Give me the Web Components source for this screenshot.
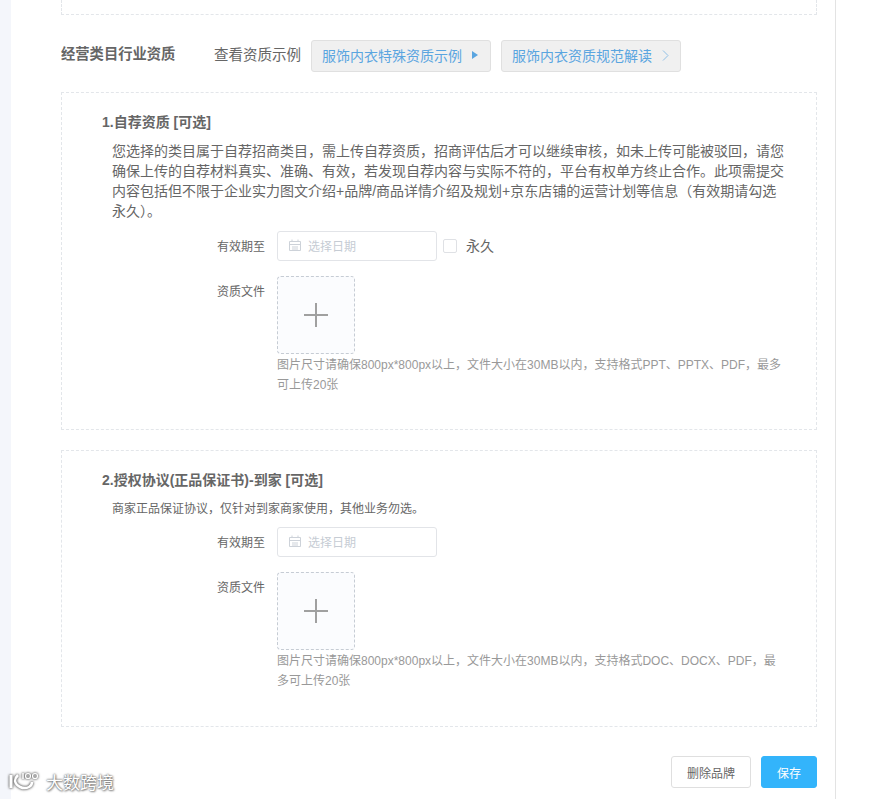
<!DOCTYPE html>
<html lang="zh">
<head>
<meta charset="utf-8">
<title>经营类目行业资质</title>
<style>
  html, body { margin: 0; padding: 0; background: #fff; }
  body { font-family: "Liberation Sans", "Noto Sans CJK SC", sans-serif; color: #666; }
</style>
</head>
<body>
<qual-page>
  <qual-header></qual-header>

  <qual-card heading="1.自荐资质 [可选]" style="--card-h:338px;--desc-size:14px;--desc-pb:10px">
    <span slot="desc">您选择的类目属于自荐招商类目，需上传自荐资质，招商评估后才可以继续审核，如未上传可能被驳回，请您确保上传的自荐材料真实、准确、有效，若发现自荐内容与实际不符的，平台有权单方终止合作。此项需提交内容包括但不限于企业实力图文介绍+品牌/商品详情介绍及规划+京东店铺的运营计划等信息（有效期请勾选永久）。</span>
    <date-row forever></date-row>
    <upload-row hint="图片尺寸请确保800px*800px以上，文件大小在30MB以内，支持格式PPT、PPTX、PDF，最多可上传20张"></upload-row>
  </qual-card>

  <qual-card heading="2.授权协议(正品保证书)-到家 [可选]" style="--card-h:277px;--desc-size:12px;--desc-pb:8px">
    <span slot="desc">商家正品保证协议，仅针对到家商家使用，其他业务勿选。</span>
    <date-row></date-row>
    <upload-row hint="图片尺寸请确保800px*800px以上，文件大小在30MB以内，支持格式DOC、DOCX、PDF，最多可上传20张"></upload-row>
  </qual-card>

  <page-footer></page-footer>
</qual-page>

<script>
// Page shell: grey strip on the left, white column with a right hairline
class QualPage extends HTMLElement {
  constructor() {
    super();
    this.attachShadow({ mode: 'open' });
    this.shadowRoot.innerHTML = `
      <style>
        :host { display: flex; width: 870px; height: 799px; overflow: hidden; background: #fff; }
        .strip { width: 11px; flex: none; background: #f4f6fb; }
        .main {
          width: 825px;
          flex: none;
          box-sizing: border-box;
          border-right: 1px solid #e3e3e3;
          padding: 0 18px 0 50px;
          display: flex;
          flex-direction: column;
        }
        .top { height: 14px; flex: none; border: 1px dashed #e3e6ea; border-top: 0; box-sizing: content-box; }
      </style>
      <div class="strip"></div>
      <div class="main">
        <div class="top"></div>
        <slot></slot>
      </div>
    `;
  }
}

class QualHeader extends HTMLElement {
  constructor() {
    super();
    this.attachShadow({ mode: 'open' });
    this.shadowRoot.innerHTML = `
      <style>
        :host { display: flex; align-items: center; height: 32px; margin-top: 25px; margin-bottom: 20px; }
        h2 { margin: 0; width: 153px; font-size: 14.3px; font-weight: bold; color: #666; line-height: 20px; padding-bottom: 4px; }
        .see { font-size: 14.5px; color: #666; width: 97px; padding-bottom: 6px; }
        a {
          box-sizing: border-box;
          width: 180px;
          height: 32px;
          display: flex;
          align-items: center;
          padding: 0 0 2px 10px;
          font-size: 14px;
          color: #5aa5e0;
          background: #f0f0f0;
          border: 1px solid #e0e0e0;
          border-radius: 3px;
          margin-right: 10px;
        }
        svg { margin-left: 10px; }
      </style>
      <h2>经营类目行业资质</h2>
      <span class="see">查看资质示例</span>
      <a>服饰内衣特殊资质示例
        <svg width="6" height="8" viewBox="0 0 6 8"><path d="M0 0l6 4-6 4z" fill="#5aa5e0"/></svg></a>
      <a>服饰内衣资质规范解读
        <svg width="7" height="11" viewBox="0 0 7 11"><path d="M1 .5l5 5-5 5" fill="none" stroke="#8fbfe6" stroke-width="1"/></svg></a>
    `;
  }
}

// Dashed card with a numbered heading, a description and its form rows
class QualCard extends HTMLElement {
  constructor() {
    super();
    this.attachShadow({ mode: 'open' });
    this.shadowRoot.innerHTML = `
      <style>
        :host {
          display: block;
          box-sizing: border-box;
          height: var(--card-h);
          border: 1px dashed #e3e6ea;
          padding: 19px 30px 0 40px;
          margin-bottom: 20px;
        }
        h3 { margin: 0; font-size: 14px; line-height: 20px; font-weight: bold; color: #666; }
        .desc { margin: 9px 0 0 10px; font-size: var(--desc-size); line-height: 20px; color: #666; padding-bottom: var(--desc-pb); }
      </style>
      <h3></h3>
      <div class="desc"><slot name="desc"></slot></div>
      <slot></slot>
    `;
    this.shadowRoot.querySelector('h3').textContent = this.getAttribute('heading');
  }
}

class DateRow extends HTMLElement {
  constructor() {
    super();
    this.attachShadow({ mode: 'open' });
    const forever = this.hasAttribute('forever');
    this.shadowRoot.innerHTML = `
      <style>
        :host { display: flex; align-items: center; height: 30px; padding-left: 113px; }
        label { width: 50px; text-align: right; font-size: 12px; color: #666; margin-right: 12px; padding-bottom: 2px; }
        .input {
          box-sizing: border-box;
          width: 160px;
          height: 30px;
          border: 1px solid #e2e4e8;
          border-radius: 3px;
          display: flex;
          align-items: center;
          padding: 0 0 2px 11px;
          font-size: 12px;
          color: #c6ccd4;
          gap: 7px;
        }
        .box { box-sizing: border-box; width: 14px; height: 14px; border: 1px solid #dfe1e5; border-radius: 2px; margin-left: 6px; }
        .txt { font-size: 14px; color: #666; margin-left: 9px; padding-bottom: 2px; }
      </style>
      <label>有效期至</label>
      <div class="input">
        <svg width="12" height="12" viewBox="0 0 12 12" fill="none" stroke="#cdd2d9">
          <path d="M.5 2.5h11v9H.5z"/><path d="M3 .5v2M9 .5v2M.5 5.5h11M3 8h6M3 10h6"/>
        </svg>
        <span>选择日期</span>
      </div>
      ${forever ? '<span class="box"></span><span class="txt">永久</span>' : ''}
    `;
  }
}

class UploadRow extends HTMLElement {
  constructor() {
    super();
    this.attachShadow({ mode: 'open' });
    this.shadowRoot.innerHTML = `
      <style>
        :host { display: flex; padding: 15px 0 0 113px; align-items: flex-start; }
        label { width: 50px; text-align: right; font-size: 12px; line-height: 32px; color: #666; margin-right: 12px; flex: none; }
        .col { width: 510px; }
        .drop {
          box-sizing: border-box;
          width: 78px;
          height: 78px;
          border: 1px dashed #c6ccd4;
          border-radius: 4px;
          background: #fbfcfe;
          display: flex;
          align-items: center;
          justify-content: center;
        }
        p { margin: 0; padding-top: 1px; font-size: 12px; line-height: 20px; color: #999; }
      </style>
      <label>资质文件</label>
      <div class="col">
        <div class="drop">
          <svg width="24" height="24" viewBox="0 0 24 24"><path d="M12 0v24M0 12h24" stroke="#a0a0a0" stroke-width="2" fill="none"/></svg>
        </div>
        <p></p>
      </div>
    `;
    this.shadowRoot.querySelector('p').textContent = this.getAttribute('hint');
  }
}

class PageFooter extends HTMLElement {
  constructor() {
    super();
    this.attachShadow({ mode: 'open' });
    this.shadowRoot.innerHTML = `
      <style>
        :host { display: flex; justify-content: flex-end; gap: 10px; margin-top: 9px; }
        button {
          box-sizing: border-box;
          height: 32px;
          border-radius: 3px;
          font: 12px "Liberation Sans", "Noto Sans CJK SC", sans-serif;
          padding: 0;
        }
        .del { width: 80px; background: #fff; border: 1px solid #dfdfdf; color: #666; }
        .save { width: 56px; background: #33b4fb; border: 1px solid #33b4fb; color: #fff; }
      </style>
      <button class="del">删除品牌</button>
      <button class="save">保存</button>
    `;
  }
}

// Blurry watermark sitting on top of the page corner
class WaterMark extends HTMLElement {
  constructor() {
    super();
    this.attachShadow({ mode: 'open' });
    this.shadowRoot.innerHTML = `
      <style>
        :host { position: absolute; left: 8px; top: 770px; display: flex; align-items: center; gap: 5px; }
        span {
          font-size: 17px;
          line-height: 22px;
          color: #fff;
          text-shadow: 0 0 2px #777, 0 0 2px #777, 1px 1px 2px #999;
          font-family: "Noto Sans CJK SC", sans-serif;
          position: relative;
          top: 1px;
        }
        svg { filter: drop-shadow(0 0 1px #666) drop-shadow(0 0 1px #999); }
      </style>
      <svg width="33" height="22" viewBox="0 0 33 22" fill="none" stroke="#fff">
        <path d="M3 5v13" stroke-width="3"/>
        <path d="M10 5c-2 2-3 4-3 6 1 5 8 9 14 6 2-1 3-3 3-5" stroke-width="2.5"/>
        <path d="M15 3v6" stroke-width="1.5"/>
        <circle cx="20" cy="6" r="2.5" stroke-width="1.2"/>
        <circle cx="27" cy="6" r="2.5" stroke-width="1.2"/>
      </svg>
      <span>大数跨境</span>
    `;
  }
}

customElements.define('qual-page', QualPage);
customElements.define('qual-header', QualHeader);
customElements.define('qual-card', QualCard);
customElements.define('date-row', DateRow);
customElements.define('upload-row', UploadRow);
customElements.define('page-footer', PageFooter);
customElements.define('water-mark', WaterMark);
document.body.appendChild(document.createElement('water-mark'));
</script>
</body>
</html>
